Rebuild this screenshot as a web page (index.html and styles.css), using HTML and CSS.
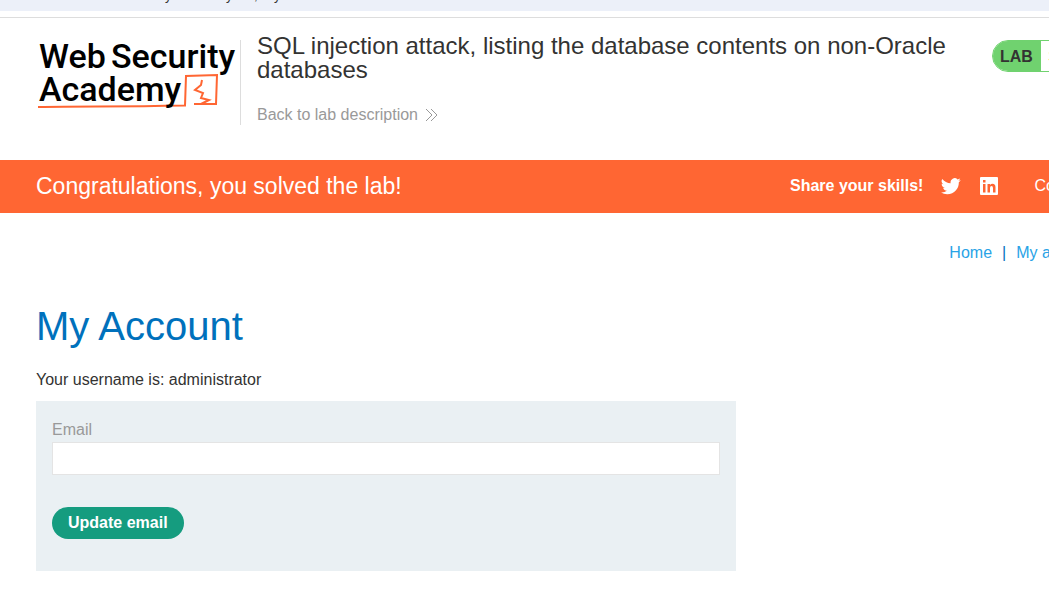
FILE: index.html
```
<!DOCTYPE html>
<html lang="en">
<head>
<meta charset="utf-8">
<title>My Account</title>
<link rel="stylesheet" href="styles.css">
</head>
<body>
<div class="page">
  <div class="topbar"><span class="topbar-text"><span>y</span><span>y</span><span>,</span><span>y</span></span></div>
  <header class="header">
    <a class="logo" href="#" aria-label="Web Security Academy">
      <svg width="204" height="84" viewBox="0 0 204 84">
        <g class="logo-mark">
          <path d="M2 67C50 66 80 67 149 65.500L150 36L181 35L180 64L158 64"/>
          <path d="M166 40L165 45L159 50L167 53L165 58L173 60L165 64"/>
        </g>
        <g class="logo-text">
          <text x="3" y="28">Web</text>
          <text x="75" y="28">Security</text>
          <text x="3" y="61">Academy</text>
        </g>
      </svg>
    </a>
    <div class="heading">
      <h2 class="lab-title">SQL injection attack, listing the database contents on non-Oracle databases</h2>
      <a class="back" href="#">Back to lab description
        <svg width="13" height="14" viewBox="0 0 13 14"><path d="M1 1L7 7L1 13M6 1L12 7L6 13"/></svg>
      </a>
    </div>
    <div class="status"><span class="status-tag">LAB</span><span class="status-value">Solved</span></div>
  </header>
  <section class="banner">
    <h4 class="banner-title">Congratulations, you solved the lab!</h4>
    <div class="share">
      <b>Share your skills!</b>
      <a class="social" href="#" aria-label="Twitter"><svg width="20" height="20" viewBox="0 0 24 24"><path d="M23.640 4.940c-.87.390-1.810.650-2.800.770 1-.6 1.780-1.560 2.140-2.700-.94.560-1.990.970-3.100 1.180A4.880 4.880 0 0 0 11.570 8.640 13.850 13.850 0 0 1 1.520 3.540a4.880 4.880 0 0 0 1.510 6.510c-.8-.03-1.560-.25-2.210-.61v.06c0 2.360 1.680 4.330 3.910 4.780-.69.190-1.420.220-2.200.08.620 1.940 2.420 3.350 4.560 3.390A9.800 9.800 0 0 1 0 19.770a13.820 13.820 0 0 0 7.490 2.200c9.050 0 14.260-7.650 13.890-14.520.95-.69 1.780-1.550 2.260-2.510z"/></svg></a>
      <a class="social" href="#" aria-label="LinkedIn"><svg width="20" height="20" viewBox="0 0 20 20"><path fill-rule="evenodd" d="M2 1h16q1 0 1 1v16q0 1-1 1H2q-1 0-1-1V2q0-1 1-1zM4 8v8.500h2.500V8zM4 4v2.500h2.500V4zM8.500 8v8.500H11V12q0-2 1.500-2t1.500 2v4.500h2.500v-5q0-3.700-3-3.700-1.700 0-2.500 1.200V8z"/></svg></a>
      <a class="continue" href="#">Continue learning</a>
    </div>
  </section>
  <nav class="nav"><a href="#">Home</a><span>|</span><a href="#">My account</a></nav>
  <main class="content">
    <h1 class="title">My Account</h1>
    <p class="username">Your username is: administrator</p>
    <form class="form">
      <label class="label" for="email">Email</label>
      <input class="input" id="email" type="email">
      <button class="button" type="button">Update email</button>
    </form>
  </main>
</div>
</body>
</html>
```
FILE: styles.css
```
* { box-sizing: border-box; }
body {
  margin: 0;
  overflow-x: hidden;
  background: #fff;
  color: #333332;
  font: 16px/24px "Liberation Sans", Arial, sans-serif;
}
h1, h2, h4, p { margin: 0; font-weight: 400; }
a { text-decoration: none; }
.page { width: calc(100% + 136px); }
.topbar { height: 11px; overflow: hidden; background: #ecf0f9; }
.topbar-text {
  display: flex;
  margin-top: -12px;
  padding-left: 165px;
  font-size: 13px;
  line-height: 16px;
}
.topbar-text span { width: 61px; }
.topbar-text span + span { width: 28px; }
.topbar-text span + span + span { width: 20px; }
.header {
  display: flex;
  align-items: flex-start;
  margin-top: 6px;
  padding: 22px 36px 33px;
  border-top: 1px solid #ddd;
}
.logo { flex: none; height: 85px; border-right: 1px solid #ddd; }
.logo svg { display: block; }
.logo-text { font: 500 34px Roboto, sans-serif; fill: #000; }
.logo-mark { fill: none; stroke: #f63; stroke-width: 2; }
.heading { flex: 1; padding: 0 16px; }
.lab-title { max-width: 700px; margin-top: -6px; font-size: 24px; line-height: 24px; }
.back { display: flex; align-items: center; gap: 7px; margin-top: 20px; padding-top: 1px; color: #999; }
.back svg { fill: none; stroke: #999; }
.status {
  display: flex;
  width: 157px;
  height: 32px;
  border: 1px solid #70d26f;
  border-radius: 16px;
  overflow: hidden;
  line-height: 32px;
}
.status-tag { padding: 0 8px 0 7px; background: #70d26f; font-weight: 700; }
.status-value { padding-left: 7px; color: #fb2; }
.banner {
  display: flex;
  align-items: center;
  justify-content: space-between;
  height: 53px;
  padding: 0 20px 2px 36px;
  background: #f63;
  color: #fff;
}
.banner-title { font-size: 23px; }
.share { display: flex; align-items: center; width: 375px; white-space: nowrap; }
.social { display: flex; margin-left: 18px; }
.social svg { fill: #fff; }
.continue { margin-left: 35px; color: #fff; }
.nav {
  display: flex;
  justify-content: flex-end;
  gap: 10px;
  padding: 28px 87px 0 0;
  color: #0071bc;
}
.nav a { color: #29a3e6; }
.content { padding: 36px; }
.title { color: #0071bc; font-size: 40px; line-height: 50px; }
.username { margin-top: 17px; }
.form {
  max-width: 700px;
  margin-top: 9px;
  padding: 17px 16px 32px;
  background: #eaf0f3;
}
.label { display: block; color: #999; }
.input {
  display: block;
  width: 100%;
  height: 33px;
  margin: 0 0 32px;
  border: 1px solid #e4e4e4;
  background: #fff;
  font: inherit;
}
.button {
  height: 32px;
  padding: 0 16px;
  border: 0;
  border-radius: 16px;
  background: #159c7f;
  color: #fff;
  font: 700 16px "Liberation Sans", Arial, sans-serif;
}
```
